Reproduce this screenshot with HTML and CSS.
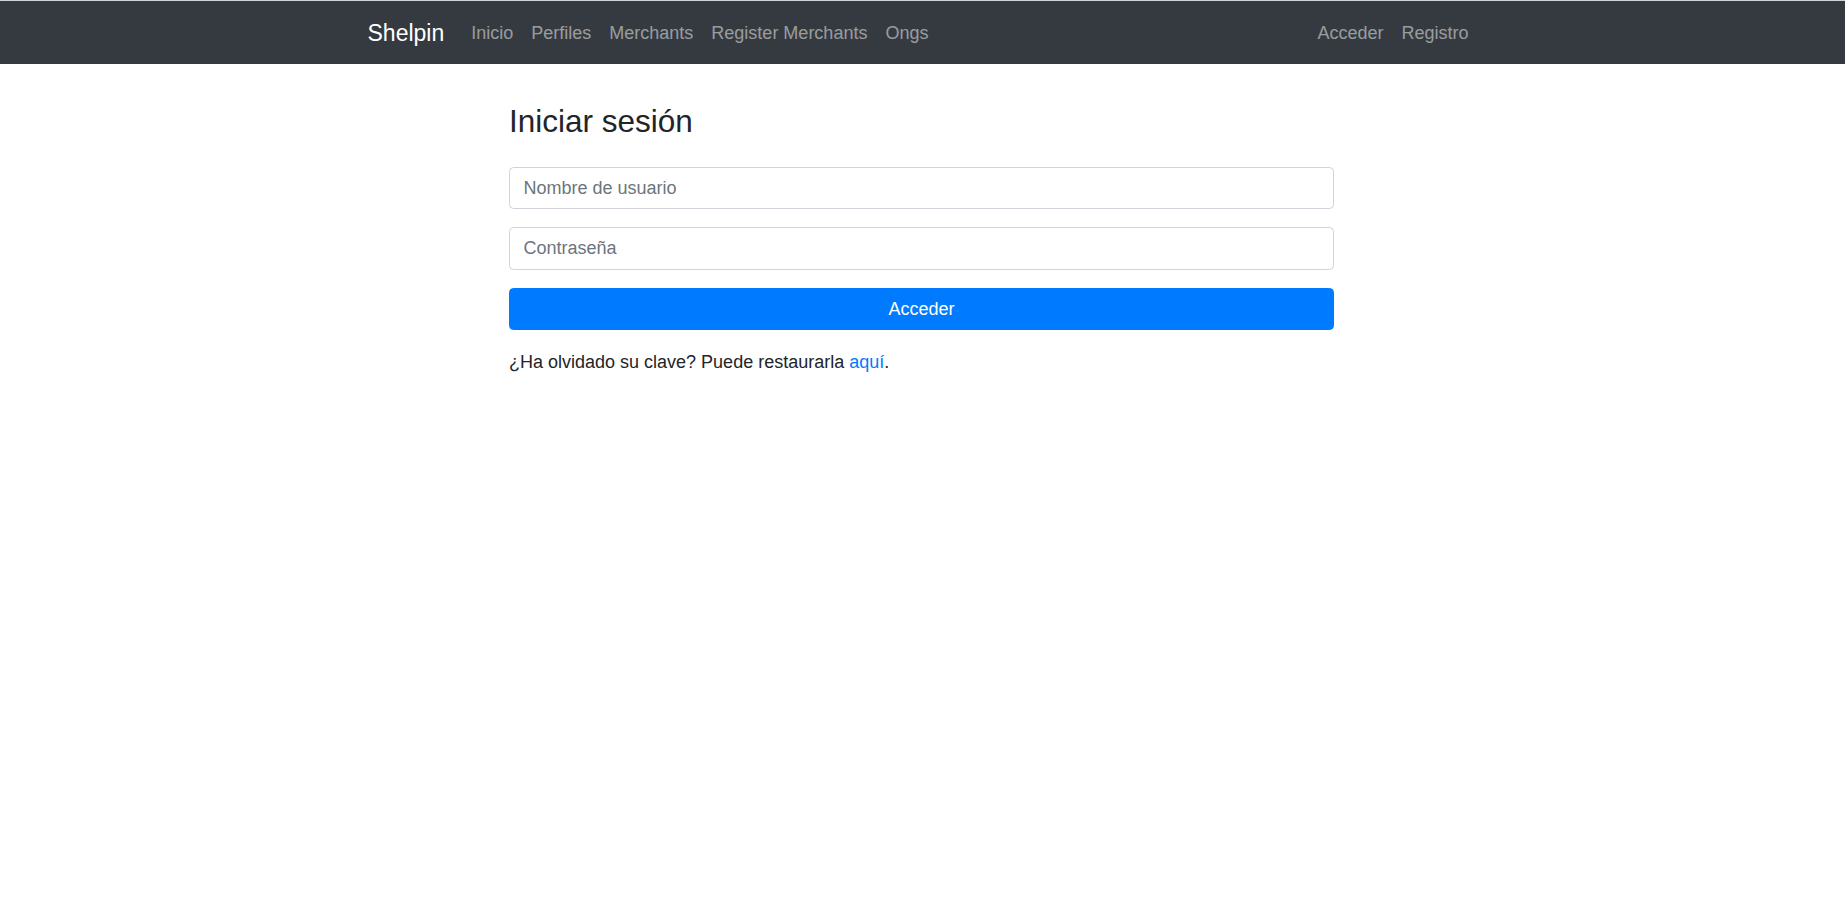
FILE: index.html
```html
<!DOCTYPE html>
<html lang="es">
<head>
<meta charset="utf-8">
<title>Shelpin - Iniciar sesión</title>
<link rel="stylesheet" href="styles.css">
</head>
<body>
<nav class="navbar">
  <div class="container nav-inner">
    <a class="brand" href="#">Shelpin</a>
    <ul class="nav-list">
      <li><a class="nav-link" href="#">Inicio</a></li>
      <li><a class="nav-link" href="#">Perfiles</a></li>
      <li><a class="nav-link" href="#">Merchants</a></li>
      <li><a class="nav-link" href="#">Register Merchants</a></li>
      <li><a class="nav-link" href="#">Ongs</a></li>
    </ul>
    <ul class="nav-list nav-right">
      <li><a class="nav-link" href="#">Acceder</a></li>
      <li><a class="nav-link" href="#">Registro</a></li>
    </ul>
  </div>
</nav>
<main class="container">
  <div class="login-col">
    <h3 class="title">Iniciar sesión</h3>
    <form class="login-form">
      <div class="form-group">
        <input class="form-control" type="text" placeholder="Nombre de usuario">
      </div>
      <div class="form-group">
        <input class="form-control" type="password" placeholder="Contraseña">
      </div>
      <button class="btn-primary" type="button">Acceder</button>
    </form>
    <p class="forgot">¿Ha olvidado su clave? Puede restaurarla <a class="link" href="#">aquí</a>.</p>
  </div>
</main>
</body>
</html>
```
FILE: styles.css
```css
html {
  font-size: 18px;
}
* {
  box-sizing: border-box;
}
body {
  margin: 0;
  font-family: "Liberation Sans", Arial, Helvetica, sans-serif;
  font-size: 1rem;
  line-height: 1.5;
  color: #212529;
  background: #fff;
}
.container {
  width: 100%;
  max-width: 1140px;
  margin: 0 auto;
  padding: 0 15px;
}
.navbar {
  background: #343a40;
  border-top: 1px solid #d2d3d4;
  padding: 10px 18px 8px;
}
.navbar .container {
  padding: 0 15px;
}
.nav-inner {
  display: flex;
  align-items: center;
}
.brand {
  color: #fff;
  text-decoration: none;
  font-size: 23px;
  line-height: 33.75px;
  padding: 5.625px 0;
  margin-right: 18px;
}
.nav-list {
  display: flex;
  list-style: none;
  margin: 0;
  padding: 0;
}
.nav-right {
  margin-left: auto;
}
.nav-link {
  display: block;
  padding: 9px 9px;
  color: rgba(255, 255, 255, 0.5);
  text-decoration: none;
  line-height: 27px;
}
.login-col {
  width: 855px;
  margin: 0 auto;
  padding: 0 15px;
  position: relative;
  left: -1px;
}
.title {
  margin: 39px 0 26px;
  font-size: 31.5px;
  font-weight: 500;
  line-height: 1.2;
}
.login-form {
  margin: 0;
}
.form-group {
  margin-bottom: 18px;
}
.form-control {
  display: block;
  width: 100%;
  height: 42.5px;
  padding: 6.75px 13.5px;
  font-family: inherit;
  font-size: 18px;
  line-height: 1.5;
  color: #495057;
  background: #fff;
  border: 1px solid #ced4da;
  border-radius: 4.5px;
  outline: none;
}
.form-control::placeholder {
  color: #6c757d;
  opacity: 1;
}
.btn-primary {
  display: block;
  width: 100%;
  height: 42.5px;
  padding: 6.75px 13.5px;
  font-family: inherit;
  font-size: 18px;
  line-height: 1.5;
  color: #fff;
  background: #007bff;
  border: 1px solid #007bff;
  border-radius: 4.5px;
  cursor: pointer;
}
.forgot {
  margin: 19px 0 0;
}
.link {
  color: #007bff;
  text-decoration: none;
}
```
